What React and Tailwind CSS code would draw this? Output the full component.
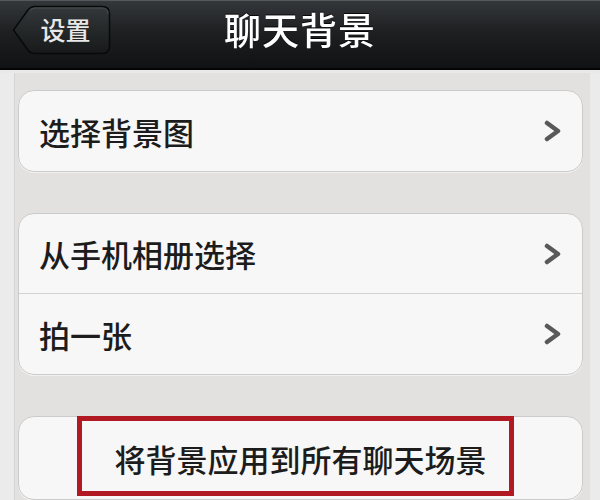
import React from 'react';

const cjk = "font-['Noto_Sans_CJK_SC','Noto_Sans',sans-serif]";

const Chevron = () => (
  <svg width="18" height="22" viewBox="0 0 18 22" className="shrink-0">
    <path d="M3 3 L14 11 L3 19" fill="none" stroke="#595959" strokeWidth="4.5" strokeLinecap="round" strokeLinejoin="round" />
  </svg>
);

const BackButton = () => (
  <button className="relative w-[99px] h-[50px] flex items-center justify-center pl-[8px]">
    <svg className="absolute inset-0" width="99" height="50" viewBox="0 0 99 50">
      <defs>
        <linearGradient id="backbg" x1="0" y1="0" x2="0" y2="1">
          <stop offset="0" stopColor="#34383a" />
          <stop offset="1" stopColor="#17191a" />
        </linearGradient>
      </defs>
      <path
        d="M1.5 25 L16 5 Q18.5 1.5 23 1.5 H90 Q97.5 1.5 97.5 9 V41 Q97.5 48.5 90 48.5 H23 Q18.5 48.5 16 45 Z"
        fill="url(#backbg)"
        stroke="#080909"
        strokeWidth="1.5"
      />
      <path d="M17.5 6 Q19.5 3 23 3 H90 Q96 3 96 9" fill="none" stroke="#4a4e50" strokeWidth="1" />
    </svg>
    <span className={`relative text-[25px] leading-none font-medium text-[#e8e8e8] ${cjk}`}>设置</span>
  </button>
);

const Row = ({ label, last }) => (
  <div className={`h-[80px] flex items-center justify-between pl-[20px] pr-[20px] ${last ? '' : 'border-b border-[#d2d2d2]'}`}>
    <span className={`text-[31px] leading-none font-medium text-[#1c1c1c] ${cjk}`}>{label}</span>
    <Chevron />
  </div>
);

const Card = ({ children, className = '' }) => (
  <div className={`bg-[#f7f7f7] border border-[#cbcbcb] rounded-[16px] shadow-[0_1px_0_#f1f1f1] overflow-hidden ${className}`}>
    {children}
  </div>
);

export default function App() {
  return (
    <div className="w-[600px] h-[500px] overflow-hidden flex flex-col bg-[#ebebeb]">
      <header className="h-[70px] shrink-0 grid grid-cols-[1fr_auto_1fr] items-center px-[12px] pb-[10px] bg-gradient-to-b from-[#34373a] via-[#1c1e20] to-[#101213] border-t border-[#55595c] border-b-2 border-b-[#050505]">
        <div className="flex items-center">
          <BackButton />
        </div>
        <h1 className={`text-[37px] leading-none font-medium text-white tracking-[1px] drop-shadow-[0_-1px_0_rgba(0,0,0,0.8)] ${cjk}`}>
          聊天背景
        </h1>
        <div />
      </header>
      <div className="h-[3px] shrink-0 bg-[#e9e9e9]" />
      <main className="flex-1 ml-[14px] mr-[10px] border-l border-[#d5d5d5] bg-[#e2e1df] pl-[3px] pr-[7px] pt-[17px] flex flex-col gap-[41px]">
        <Card>
          <Row label="选择背景图" last />
        </Card>
        <Card>
          <Row label="从手机相册选择" />
          <Row label="拍一张" last />
        </Card>
        <div className="relative">
          <Card className="h-[84px] flex items-center justify-center">
            <span className={`text-[31px] leading-none font-medium text-[#1c1c1c] ${cjk}`}>将背景应用到所有聊天场景</span>
          </Card>
          <div className="absolute left-[59px] top-0 w-[437px] h-[80px] border-[5px] border-[#b11a22]" />
        </div>
      </main>
    </div>
  );
}
